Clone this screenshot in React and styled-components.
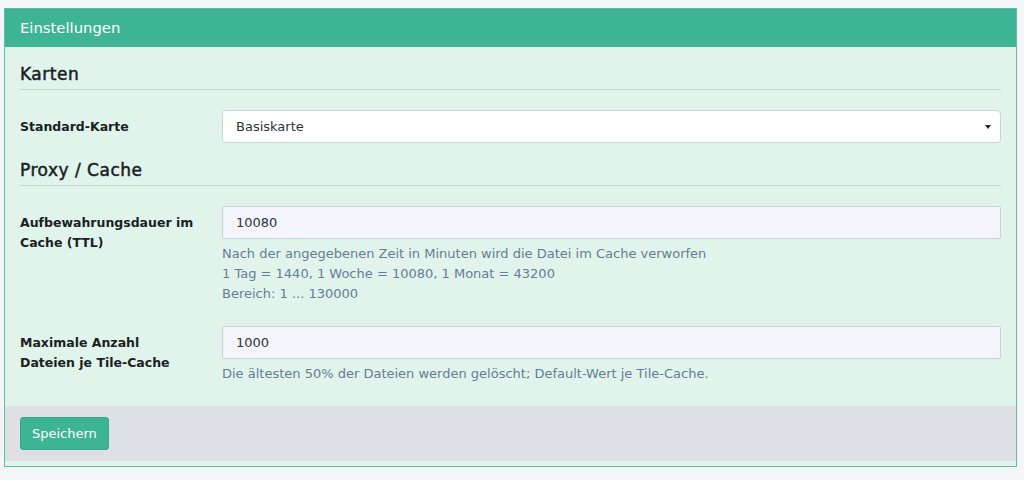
import React from "react";
import styled, { createGlobalStyle } from "styled-components";

const GlobalStyle = createGlobalStyle`
  html, body {
    margin: 0;
    background: #f3f5f9;
    font-family: "DejaVu Sans", "Liberation Sans", sans-serif;
  }
`;

const Page = styled.div`
  padding: 8px 7px 12px 4px;
`;

const Card = styled.div`
  border: 1px solid #5fbf9f;
  background: #e0f4ec;
  padding-bottom: 5px;
`;

const CardHeader = styled.div`
  background: #3db594;
  color: #fff;
  font-size: 14.8px;
  height: 38px;
  line-height: 38px;
  padding: 0 15px;
`;

const CardBody = styled.div`
  padding: 17px 15px 1px;
`;

const SectionTitle = styled.h5`
  margin: ${(p) => (p.first ? "0" : "17px")} 0 20px;
  font-size: 17px;
  font-weight: 400;
  -webkit-text-stroke: 0.5px #1b1f24;
  color: #1b1f24;
  line-height: 20px;
  padding-bottom: 5px;
  border-bottom: 1px solid #c5d4d6;
  letter-spacing: 0.5px;
`;

const Row = styled.div`
  display: grid;
  grid-template-columns: 202px 1fr;
  margin-bottom: ${(p) => p.gap || 0}px;
`;

const Label = styled.label`
  font-size: 12.5px;
  font-weight: 600;
  color: #1b1f24;
  line-height: 20px;
  padding-top: 7px;
  padding-right: 24px;
`;

const SelectBox = styled.div`
  position: relative;
  height: 31px;
  border: 1px solid #c9d4da;
  border-radius: 4px;
  background: #fff;
  display: flex;
  align-items: center;
  padding: 0 13px;
  font-size: 13px;
  color: #2e3338;
`;

const Caret = styled.span`
  margin-left: auto;
  margin-right: -4px;
  width: 0;
  height: 0;
  border-left: 3.5px solid transparent;
  border-right: 3.5px solid transparent;
  border-top: 4px solid #222;
`;

const Input = styled.input`
  box-sizing: border-box;
  width: 100%;
  height: 33px;
  border: 1px solid #c9d2db;
  border-radius: 2px;
  background: #f3f5fa;
  padding: 0 13px;
  font-family: inherit;
  font-size: 13px;
  color: #2e3338;
  outline: none;
`;

const Help = styled.div`
  margin-top: 5px;
  font-size: 13px;
  line-height: 20px;
  color: #667d96;
`;

const Footer = styled.div`
  background: #dee0e6;
  padding: 11px 15px;
`;

const Button = styled.button`
  height: 33px;
  padding: 0 11px;
  border: 1px solid #36a886;
  border-radius: 3px;
  background: #3db594;
  color: #fff;
  font-family: inherit;
  font-size: 13px;
  cursor: pointer;
`;

export default function App() {
  return (
    <Page>
      <GlobalStyle />
      <Card>
        <CardHeader>Einstellungen</CardHeader>
        <CardBody>
          <SectionTitle first>Karten</SectionTitle>
          <Row>
            <Label>Standard-Karte</Label>
            <SelectBox>
              Basiskarte
              <Caret />
            </SelectBox>
          </Row>
          <SectionTitle>Proxy / Cache</SectionTitle>
          <Row gap={22}>
            <Label>Aufbewahrungsdauer im Cache (TTL)</Label>
            <div>
              <Input defaultValue="10080" />
              <Help>
                Nach der angegebenen Zeit in Minuten wird die Datei im Cache verworfen
                <br />1 Tag = 1440, 1 Woche = 10080, 1 Monat = 43200
                <br />Bereich: 1 ... 130000
              </Help>
            </div>
          </Row>
          <Row gap={21}>
            <Label>Maximale Anzahl Dateien je Tile-Cache</Label>
            <div>
              <Input defaultValue="1000" />
              <Help>
                Die ältesten 50% der Dateien werden gelöscht; Default-Wert je Tile-Cache.
              </Help>
            </div>
          </Row>
        </CardBody>
        <Footer>
          <Button>Speichern</Button>
        </Footer>
      </Card>
    </Page>
  );
}
